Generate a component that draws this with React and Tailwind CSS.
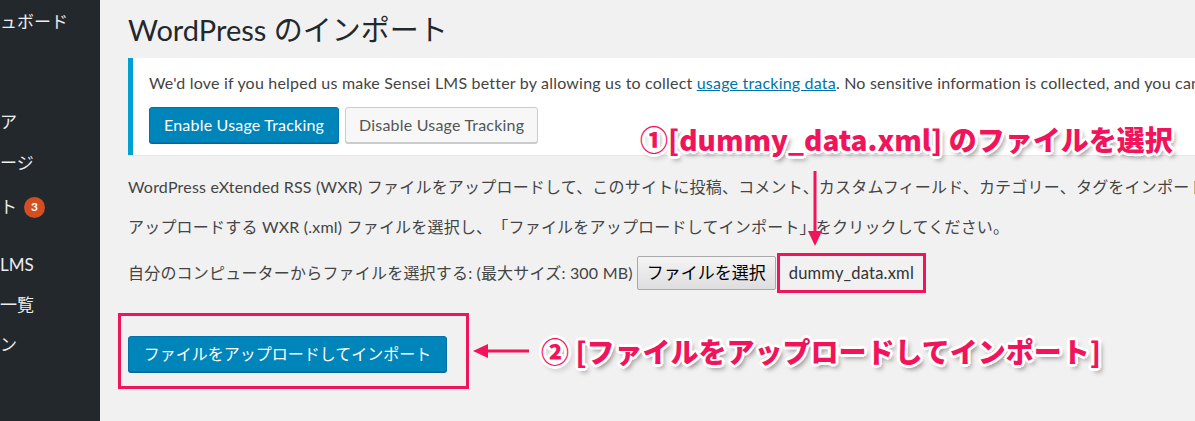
const pink = '#f2145a';

const menu = [
  { label: 'ュボード', mt: 'mt-[2px]' },
  { label: 'ア', mt: 'mt-[60px]' },
  { label: 'ージ', mt: 'mt-[1px]' },
  { label: 'ト', mt: 'mt-[4px]', badge: 3 },
  { label: 'LMS', mt: 'mt-[18px]' },
  { label: '一覧', mt: 'mt-0' },
  { label: 'ン', mt: 'mt-0' },
];

function DownArrow() {
  return (
    <svg width="16" height="76" viewBox="0 0 16 76" className="absolute left-[707px] top-[171px]">
      <line x1="8" y1="0" x2="8" y2="62" stroke={pink} strokeWidth="3" />
      <path d="M1 60 L15 60 L8 75 Z" fill={pink} />
    </svg>
  );
}

function LeftArrow() {
  return (
    <svg width="56" height="16" viewBox="0 0 56 16" className="shrink-0">
      <line x1="12" y1="8" x2="56" y2="8" stroke={pink} strokeWidth="3" />
      <path d="M0 8 L15 1 L15 15 Z" fill={pink} />
    </svg>
  );
}

const calloutText =
  "font-['Noto_Sans_CJK_JP',sans-serif] font-black tracking-normal text-[#f2145a] [text-shadow:2px_0_0_#fff,-2px_0_0_#fff,0_2px_0_#fff,0_-2px_0_#fff,2px_2px_0_#fff,-2px_-2px_0_#fff,2px_-2px_0_#fff,-2px_2px_0_#fff,3px_0_0_#fff,-3px_0_0_#fff,0_3px_0_#fff,0_-3px_0_#fff,3px_4px_5px_rgba(0,0,0,0.45)]";

export default function App() {
  return (
    <div className="flex w-[1195px] h-[421px] overflow-hidden whitespace-nowrap bg-[#f1f1f1] [text-spacing-trim:space-all] font-['Lato','Noto_Sans_CJK_JP',sans-serif]">
      <div className="w-[100px] shrink-0 bg-[#23282d] text-[#eeeeee] text-[17px]">
        {menu.map((item) => (
          <div key={item.label} className={`${item.mt} h-[40px] flex items-center gap-[7px]`}>
            <span>{item.label}</span>
            {item.badge && (
              <span className="w-[21px] h-[21px] rounded-full bg-[#d54e21] text-white text-[12px] font-bold flex items-center justify-center">
                {item.badge}
              </span>
            )}
          </div>
        ))}
      </div>

      <div className="relative flex-1 min-w-0 pl-[28px] pt-[10px] text-[#444] text-[16px] tracking-[0.2px]">
        <h1 className="text-[29px] leading-[40px] tracking-normal text-[#23282d]">WordPress のインポート</h1>

        <div className="mt-[8px] w-[1120px] h-[97px] bg-white border-l-[5px] border-[#00a0d2] shadow-[0_1px_1px_rgba(0,0,0,0.04)] pl-[16px] pt-[13px]">
          <p className="leading-[24px]">
            We'd love if you helped us make Sensei LMS better by allowing us to collect{' '}
            <a className="text-[#0073aa] underline">usage tracking data</a>. No sensitive information is collected, and you can opt out at any time.
          </p>
          <div className="mt-[12px] flex gap-[6px]">
            <button className="h-[36px] px-[14px] rounded-[3px] bg-[#0085ba] border border-[#0073aa] shadow-[0_1px_0_#006799] text-white">
              Enable Usage Tracking
            </button>
            <button className="h-[36px] px-[13px] rounded-[3px] bg-[#f7f7f7] border border-[#cccccc] shadow-[0_1px_0_#cccccc] text-[#555]">
              Disable Usage Tracking
            </button>
          </div>
        </div>

        <p className="mt-[20px] leading-[24px]">
          WordPress eXtended RSS (WXR) ファイルをアップロードして、このサイトに投稿、コメント、カスタムフィールド、カテゴリー、タグをインポートします。
        </p>
        <p className="mt-[16px] leading-[24px]">
          アップロードする WXR (.xml) ファイルを選択し、「ファイルをアップロードしてインポート」をクリックしてください。
        </p>

        <div className="mt-[14px] h-[40px] flex items-center">
          <span>自分のコンピューターからファイルを選択する: </span>
          <span className="ml-[4px] text-[16px]">(最大サイズ: 300 MB)</span>
          <span className="ml-[4px] h-[34px] px-[9px] flex items-center border border-[#a9a9a9] rounded-[2px] bg-gradient-to-b from-[#f4f4f4] to-[#dedede] text-black text-[17px] tracking-normal">
            ファイルを選択
          </span>
          <span className="ml-[1px] h-[40px] px-[9px] flex items-center border-[3px] border-[#f2145a] text-[#333] text-[16.5px]">
            dummy_data.xml
          </span>
        </div>

        <div className="mt-[20px] ml-[-10px] flex items-center">
          <div className="h-[76px] border-[3px] border-[#f2145a] pl-[7px] pr-[19px] pt-[20px]">
            <button className="h-[36px] w-[319px] rounded-[3px] bg-[#0085ba] border border-[#0073aa] shadow-[0_1px_0_#006799] text-white tracking-normal">
              ファイルをアップロードしてインポート
            </button>
          </div>
          <div className="ml-[4px]">
            <LeftArrow />
          </div>
          <span className={`ml-[12px] text-[28px] leading-[36px] ${calloutText}`}>
            ② [ファイルをアップロードしてインポート]
          </span>
        </div>

        <div className={`absolute left-[540px] top-[121px] text-[28px] leading-[36px] ${calloutText}`}>
          ①[dummy_data.xml] のファイルを選択
        </div>
        <DownArrow />
      </div>
    </div>
  );
}
